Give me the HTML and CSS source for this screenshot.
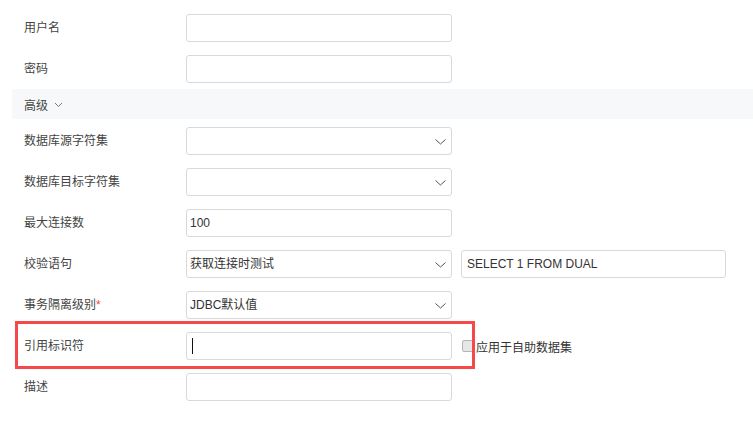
FILE: index.html
```html
<!DOCTYPE html>
<html lang="zh-CN">
<head>
<meta charset="utf-8">
<title>数据连接</title>
<link rel="stylesheet" href="styles.css">
</head>
<body>
<div class="form">
  <div class="row">
    <div class="label">用户名</div>
    <div class="field"></div>
  </div>
  <div class="row">
    <div class="label">密码</div>
    <div class="field"></div>
  </div>
  <div class="band">
    <span>高级</span>
    <svg class="band-chev" width="9" height="6" viewBox="0 0 9 6"><path d="M1 1 L4.5 4.5 L8 1" fill="none" stroke="#777" stroke-width="1"/></svg>
  </div>
  <div class="row first-adv">
    <div class="label">数据库源字符集</div>
    <div class="field select"><span class="val"></span><svg class="chev" width="11" height="6" viewBox="0 0 11 6"><path d="M0.5 0.5 L5.5 5 L10.5 0.5" fill="none" stroke="#555" stroke-width="1"/></svg></div>
  </div>
  <div class="row">
    <div class="label">数据库目标字符集</div>
    <div class="field select"><span class="val"></span><svg class="chev" width="11" height="6" viewBox="0 0 11 6"><path d="M0.5 0.5 L5.5 5 L10.5 0.5" fill="none" stroke="#555" stroke-width="1"/></svg></div>
  </div>
  <div class="row">
    <div class="label">最大连接数</div>
    <div class="field"><span class="val">100</span></div>
  </div>
  <div class="row">
    <div class="label">校验语句</div>
    <div class="field select"><span class="val">获取连接时测试</span><svg class="chev" width="11" height="6" viewBox="0 0 11 6"><path d="M0.5 0.5 L5.5 5 L10.5 0.5" fill="none" stroke="#555" stroke-width="1"/></svg></div>
    <div class="field wide"><span class="val">SELECT 1 FROM DUAL</span></div>
  </div>
  <div class="row">
    <div class="label">事务隔离级别<span class="req">*</span></div>
    <div class="field select"><span class="val">JDBC默认值</span><svg class="chev" width="11" height="6" viewBox="0 0 11 6"><path d="M0.5 0.5 L5.5 5 L10.5 0.5" fill="none" stroke="#555" stroke-width="1"/></svg></div>
  </div>
  <div class="row highlighted">
    <div class="label">引用标识符</div>
    <div class="field"><span class="caret"></span></div>
    <label class="check"><span class="box"></span><span>应用于自助数据集</span></label>
  </div>
  <div class="row">
    <div class="label">描述</div>
    <div class="field"></div>
  </div>
</div>
</body>
</html>
```

FILE: styles.css
```css
html, body {
  margin: 0;
  padding: 0;
  background: #fff;
}
body {
  font-family: "Liberation Sans", "Noto Sans CJK SC", sans-serif;
  font-size: 12px;
  color: #333;
}
.form {
  display: flex;
  flex-direction: column;
  padding-top: 14px;
}
.row {
  display: flex;
  align-items: center;
  height: 28px;
  margin-bottom: 13px;
  position: relative;
}
.row:nth-child(2) {
  margin-bottom: 6px;
}
.label {
  width: 162px;
  padding-left: 24px;
  color: #444;
  line-height: 16px;
}
.req {
  color: #f04848;
}
.field {
  box-sizing: border-box;
  width: 266px;
  height: 28px;
  border: 1px solid #d9d9d9;
  border-radius: 3px;
  display: flex;
  align-items: center;
  padding-left: 3px;
  padding-right: 4px;
  color: #333;
  background: #fff;
}
.field .val {
  flex: 1;
  line-height: 16px;
}
.chev {
  margin-right: 1px;
  margin-top: 1px;
}
.wide {
  width: 265px;
  margin-left: 9px;
  padding-left: 5px;
}
.band {
  margin-left: 12px;
  height: 30px;
  background: #f7f8fa;
  display: flex;
  align-items: center;
  padding-left: 12px;
  color: #444;
  margin-bottom: 8px;
}
.band-chev {
  margin-left: 6px;
  margin-top: 1px;
}
.caret {
  display: block;
  width: 1px;
  height: 16px;
  background: #111;
  margin-left: 2px;
}
.check {
  display: flex;
  align-items: center;
  margin-left: 10px;
  color: #333;
}
.box {
  box-sizing: border-box;
  width: 12px;
  height: 12px;
  border: 1px solid #b5b5b5;
  border-radius: 2px;
  background: #e6e6e6;
  margin-right: 2px;
}
.highlighted::after {
  content: "";
  position: absolute;
  left: 15px;
  top: -11px;
  width: 460px;
  height: 48px;
  box-sizing: border-box;
  border: 3px solid #f54848;
  pointer-events: none;
}
```
